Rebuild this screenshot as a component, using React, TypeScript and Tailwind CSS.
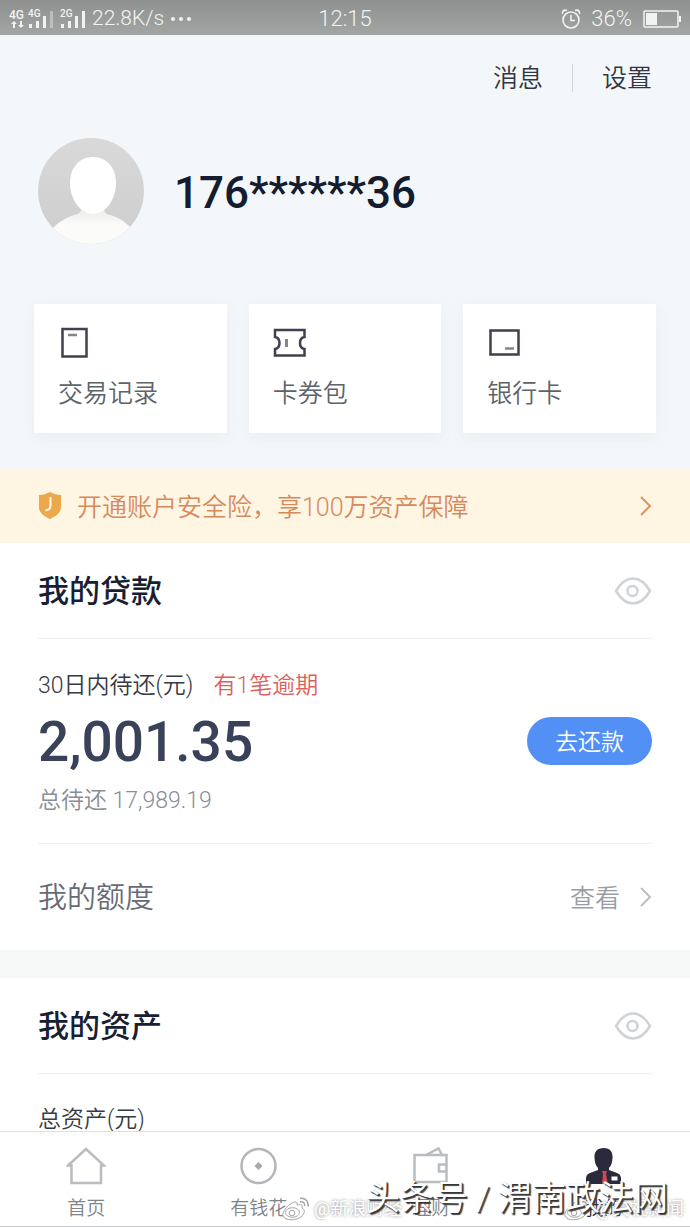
import type { ReactNode } from 'react';

const shortcuts = [
  { label: '交易记录', icon: <RecordIcon /> },
  { label: '卡券包', icon: <CouponIcon /> },
  { label: '银行卡', icon: <CardIcon /> },
];

const tabs = [
  { label: '首页', icon: <HomeIcon />, active: false },
  { label: '有钱花', icon: <CoinIcon />, active: false },
  { label: '理财', icon: <WalletIcon />, active: false },
  { label: '我的', icon: <MineIcon />, active: true },
];

function RecordIcon() {
  return (
    <svg width="34" height="34" viewBox="0 0 34 34" fill="none" aria-hidden="true">
      <rect x="4.500" y="3" width="24" height="27.500" stroke="#40404f" strokeWidth="2.500" />
      <path d="M10 9h9" stroke="#85858c" strokeWidth="2.500" />
    </svg>
  );
}

function CouponIcon() {
  return (
    <svg width="34" height="34" viewBox="0 0 34 34" fill="none" aria-hidden="true">
      <path
        d="M2 4h29.500v7c-6 1-6 11 0 12v6.500H2V23c6-1 6-11 0-12z"
        stroke="#40404f"
        strokeWidth="2.500"
      />
      <path d="M13.500 13v8" stroke="#85858c" strokeWidth="3" />
    </svg>
  );
}

function CardIcon() {
  return (
    <svg width="34" height="34" viewBox="0 0 34 34" fill="none" aria-hidden="true">
      <rect x="3.500" y="4.500" width="28" height="24" stroke="#40404f" strokeWidth="2.500" />
      <path d="M18 22.500h9" stroke="#85858c" strokeWidth="2.500" />
    </svg>
  );
}

function HomeIcon() {
  return (
    <svg width="40" height="38" viewBox="0 0 40 38" fill="none" stroke="#b9bcc0" strokeWidth="2.500" aria-hidden="true">
      <path d="M2 18.500 20 2l18 16.500h-3V36H5.500V18.500z" />
    </svg>
  );
}

function CoinIcon() {
  return (
    <svg width="38" height="38" viewBox="0 0 38 38" fill="none" aria-hidden="true">
      <circle cx="18.500" cy="19" r="17" stroke="#b3b6ba" strokeWidth="2.500" />
      <path d="M18.500 15l4 4-4 4-4-4z" fill="#a5a8ac" />
    </svg>
  );
}

function WalletIcon() {
  return (
    <svg width="38" height="38" viewBox="0 0 38 38" fill="none" stroke="#b9bcc0" strokeWidth="2.500" aria-hidden="true">
      <path d="M2.500 8h32v27h-32zM14 8l12.500-6.500L30 8M35 17.500h-8v7h8" />
    </svg>
  );
}

function MineIcon() {
  return (
    <svg width="38" height="38" viewBox="0 0 38 38" aria-hidden="true">
      <path
        d="M19 1c6 0 9 4 8.500 10-.3 5-1.500 8-3.500 10v2l8 3c3 1 4 3 4 6v5H1v-5c0-3 1-5 4-6l8-3v-2c-2-2-3.200-5-3.500-10C9 5 12 1 19 1z"
        fill="#2a2a3c"
      />
      <path d="M17 24h5l-1 3 2 10h-6l1-10z" fill="#cf4a4e" />
      <path d="M26.500 29.500h6v4h-6z" fill="#fff" />
    </svg>
  );
}

function EyeIcon() {
  return (
    <svg width="38" height="30" viewBox="0 0 38 30" fill="none" stroke="#cfd2d7" strokeWidth="2.500" aria-hidden="true">
      <path d="M2 15C7 6.500 12.500 2.500 19 2.500S31 6.500 36 15c-5 8.500-10.500 12.500-17 12.500S7 23.500 2 15z" strokeLinejoin="round" />
      <circle cx="18.500" cy="15" r="5" />
    </svg>
  );
}

function Chevron({ className }: { className: string }) {
  return (
    <svg className={className} width="14" height="24" viewBox="0 0 14 24" fill="none" stroke="currentColor" strokeWidth="2" aria-hidden="true">
      <path d="M3 3l9 9-9 9" />
    </svg>
  );
}

function WeiboLogo() {
  return (
    <svg width="28" height="24" viewBox="0 0 28 24" fill="#fff" stroke="#a4a4a4" strokeWidth="1" aria-hidden="true">
      <path d="M10 6c3-2 6-1 5 2 4-1 6 0 5 3 3 1 3 5 0 8-5 5-17 5-19 0-1-4 4-10 9-13z" />
      <ellipse cx="10.500" cy="15.500" rx="7" ry="4.800" />
      <circle cx="10" cy="16" r="2.800" />
      <path d="M18 5c3-1 5 1 4.500 4M18 1.500c5-1 9 3 8 8" fill="none" strokeWidth="1.500" />
    </svg>
  );
}

function StatusBar() {
  return (
    <header className="relative flex h-[35px] shrink-0 items-center justify-between bg-linear-to-b from-[#8f9190] to-[#a3a5a4] px-2 pt-0.5 text-[22px] text-[#f1f3f2]">
      <div className="flex items-center gap-1.5">
        <svg width="78" height="24" viewBox="0 0 78 24" fill="currentColor" aria-hidden="true">
          <text x="1" y="12" fontSize="12" fontFamily="Roboto, sans-serif" fontWeight="500">4G</text>
          <text x="20" y="10" fontSize="10" fontFamily="Roboto, sans-serif" fontWeight="500">4G</text>
          <text x="52" y="10" fontSize="10" fontFamily="Roboto, sans-serif" fontWeight="500">2G</text>
          <path d="M6 14l3 3H7v4H5v-4H3zM13 21l-3-3h2v-4h2v4h2z" />
          <path d="M21 17h3v4h-3zM28 14h3v7h-3zM35 9h3v12h-3zM53 17h3v4h-3zM60 14h3v7h-3zM67 9h3v12h-3zM74 4h3v17h-3z" />
          <path d="M42 4h3v17h-3z" opacity=".4" />
        </svg>
        <span className="text-[21px] font-light">22.8K/s</span>
        <svg width="22" height="6" viewBox="0 0 22 6" fill="currentColor" aria-hidden="true">
          <circle cx="3" cy="3" r="2" />
          <circle cx="11" cy="3" r="2" />
          <circle cx="19" cy="3" r="2" />
        </svg>
      </div>
      <time className="absolute inset-x-0 text-center font-light">12:15</time>
      <div className="flex items-center gap-2.5">
        <svg width="20" height="22" viewBox="0 0 20 22" fill="none" stroke="currentColor" strokeWidth="1.600" aria-hidden="true">
          <circle cx="10" cy="12" r="8" />
          <path d="M10 7v5.500h4M1.500 6C1 3 3 1.500 6 2.500M18.500 6C19 3 17 1.500 14 2.500" />
        </svg>
        <span className="font-light">36%</span>
        <svg width="40" height="18" viewBox="0 0 40 18" aria-hidden="true">
          <rect x="2" y="1" width="34" height="16" rx="1" fill="none" stroke="currentColor" strokeWidth="1.500" />
          <path d="M4 3h11v12H4zM37 6h2v6h-2z" fill="currentColor" />
        </svg>
      </div>
    </header>
  );
}

function SectionTitle({ children }: { children: ReactNode }) {
  return (
    <div className="flex h-24 items-center justify-between border-b border-[#eeeff1]">
      <h2 className="pt-0.5 text-[31px] font-medium text-[#172033]">{children}</h2>
      <button type="button" aria-label="显示或隐藏金额">
        <EyeIcon />
      </button>
    </div>
  );
}

export default function App() {
  return (
    <div className="relative flex h-screen flex-col overflow-hidden bg-white font-[Roboto,'Noto_Sans_CJK_SC',sans-serif] leading-none">
      <StatusBar />

      <main className="min-h-0 flex-1 overflow-hidden">
        {/* Account */}
        <section className="bg-[#f4f7fa] px-[34px] pb-9">
          <div className="flex h-[85px] items-center justify-end pr-1 text-[25px] font-[350] text-[#303643]">
            <a href="#messages" className="pt-0.5">消息</a>
            <span className="mx-[29px] h-7 w-px bg-[#d3d7dc]" />
            <a href="#settings" className="pt-0.5">设置</a>
          </div>

          <div className="flex h-[142px] items-center gap-[30px] pl-1">
            <svg width="106" height="106" viewBox="0 0 106 106" aria-hidden="true">
              <defs>
                <linearGradient id="avatar-bg" x1="0" y1="0" x2="0" y2="1">
                  <stop offset="0" stopColor="#d9d9d9" />
                  <stop offset="1" stopColor="#cdcdcd" />
                </linearGradient>
                <linearGradient id="avatar-neck" x1="0" y1="0" x2="0" y2="1">
                  <stop offset="0" stopColor="#e9e9e8" />
                  <stop offset=".5" stopColor="#fbfbf9" />
                </linearGradient>
                <clipPath id="avatar-clip">
                  <circle cx="53" cy="53" r="53" />
                </clipPath>
              </defs>
              <g clipPath="url(#avatar-clip)">
                <path d="M0 0h106v106H0z" fill="url(#avatar-bg)" />
                <path d="M44 68h22c0 6 1 8 6 9 8 2 14 6 20 12v17H15V90c6-6 12-10 21-13 6-1 8-4 8-9z" fill="url(#avatar-neck)" />
                <path d="M55 19c14 0 23 11 23 26 0 17-11 31-23 31S32 62 32 45c0-15 9-26 23-26z" fill="#fff" />
              </g>
            </svg>
            <h1 className="pt-1 text-[44px] font-medium text-[#141c30]">176******36</h1>
          </div>

          <div className="mt-[42px] grid grid-cols-3 gap-[22px]">
            {shortcuts.map((item) => (
              <button
                key={item.label}
                type="button"
                className="flex h-[129px] flex-col items-start gap-[21px] bg-white pl-6 pt-[22px] text-[25px] font-[350] text-[#5d636b] shadow-[0_4px_14px_#e9edf0]"
              >
                {item.icon}
                {item.label}
              </button>
            ))}
          </div>
        </section>

        {/* Insurance banner */}
        <a href="#insurance" className="flex h-[74px] items-center bg-[#fff5e3] pl-9 pr-[38px] text-[25px] font-[350] text-[#d68a5c]">
          <svg width="28" height="30" viewBox="0 0 28 30" aria-hidden="true">
            <path d="M14 1c4 2 7 3 11 3v12c0 6-5 9-11 12C8 25 3 22 3 16V4c4 0 7-1 11-3z" fill="#eba94c" />
            <path d="M14.500 6v9c0 3-2 4-5 4.500" fill="none" stroke="#fff8e8" strokeWidth="2" />
          </svg>
          <span className="ml-[13px] pt-0.5">开通账户安全险，享100万资产保障</span>
          <Chevron className="ml-auto text-[#dc935f]" />
        </a>

        {/* Loans */}
        <section className="px-[38px]">
          <SectionTitle>我的贷款</SectionTitle>
          <div className="flex h-[205px] items-center justify-between border-b border-[#eeeff1]">
            <div className="pt-1">
              <p className="flex gap-5 text-[23px] font-[350] text-[#363a43]">
                <span>30日内待还(元)</span>
                <span className="text-[#dc5f5c]">有1笔逾期</span>
              </p>
              <p className="mt-[18px] text-[55px] font-medium text-[#394258]">2,001.35</p>
              <p className="mt-[19px] text-[23px] font-[350] text-[#888d96]">总待还 17,989.19</p>
            </div>
            <button type="button" className="h-12 w-[125px] rounded-full bg-[#5290f5] pt-0.5 text-[23px] font-[350] text-white">
              去还款
            </button>
          </div>
          <a href="#quota" className="flex h-[106px] items-center text-[29px] font-[350] text-[#666c77]">
            <span className="pt-0.5">我的额度</span>
            <span className="ml-auto mr-[18px] pt-0.5 text-[25px] text-[#9a9da3]">查看</span>
            <Chevron className="text-[#bbbec3]" />
          </a>
        </section>

        <div className="h-7 bg-[#f7f9f9]" />

        {/* Assets */}
        <section className="px-[38px]">
          <SectionTitle>我的资产</SectionTitle>
          <p className="pt-[34px] text-[23px] font-[350] text-[#363a43]">总资产(元)</p>
        </section>
      </main>

      <nav className="grid h-24 shrink-0 grid-cols-4 border-y border-t-[#dddfe1] border-b-[#c9cbcd]">
        {tabs.map((tab) => (
          <a key={tab.label} href="#tab" className={`flex flex-col items-center gap-3.5 pt-[15px] text-[19px] font-[350] ${tab.active ? 'text-[#2a2a3c]' : 'text-[#7f838b]'}`}>
            {tab.icon}
            {tab.label}
          </a>
        ))}
      </nav>

      {/* Watermarks */}
      <div className="pointer-events-none absolute bottom-1 left-[282px] flex items-center gap-1 text-lg text-white [text-shadow:0_0_3px_#888]">
        <WeiboLogo />
        <span>@新浪财经</span>
      </div>
      <div className="pointer-events-none absolute bottom-1 right-1.5 flex items-center gap-1 text-lg text-white [text-shadow:0_0_3px_#888]">
        <WeiboLogo />
        <span>@央视新闻</span>
      </div>
      <div className="pointer-events-none absolute bottom-3 right-[22px] text-[34px] font-[350] text-white [text-shadow:1px_1px_1px_#333,2px_2px_1px_#444]">
        头条号 / 渭南政法网
      </div>
    </div>
  );
}
